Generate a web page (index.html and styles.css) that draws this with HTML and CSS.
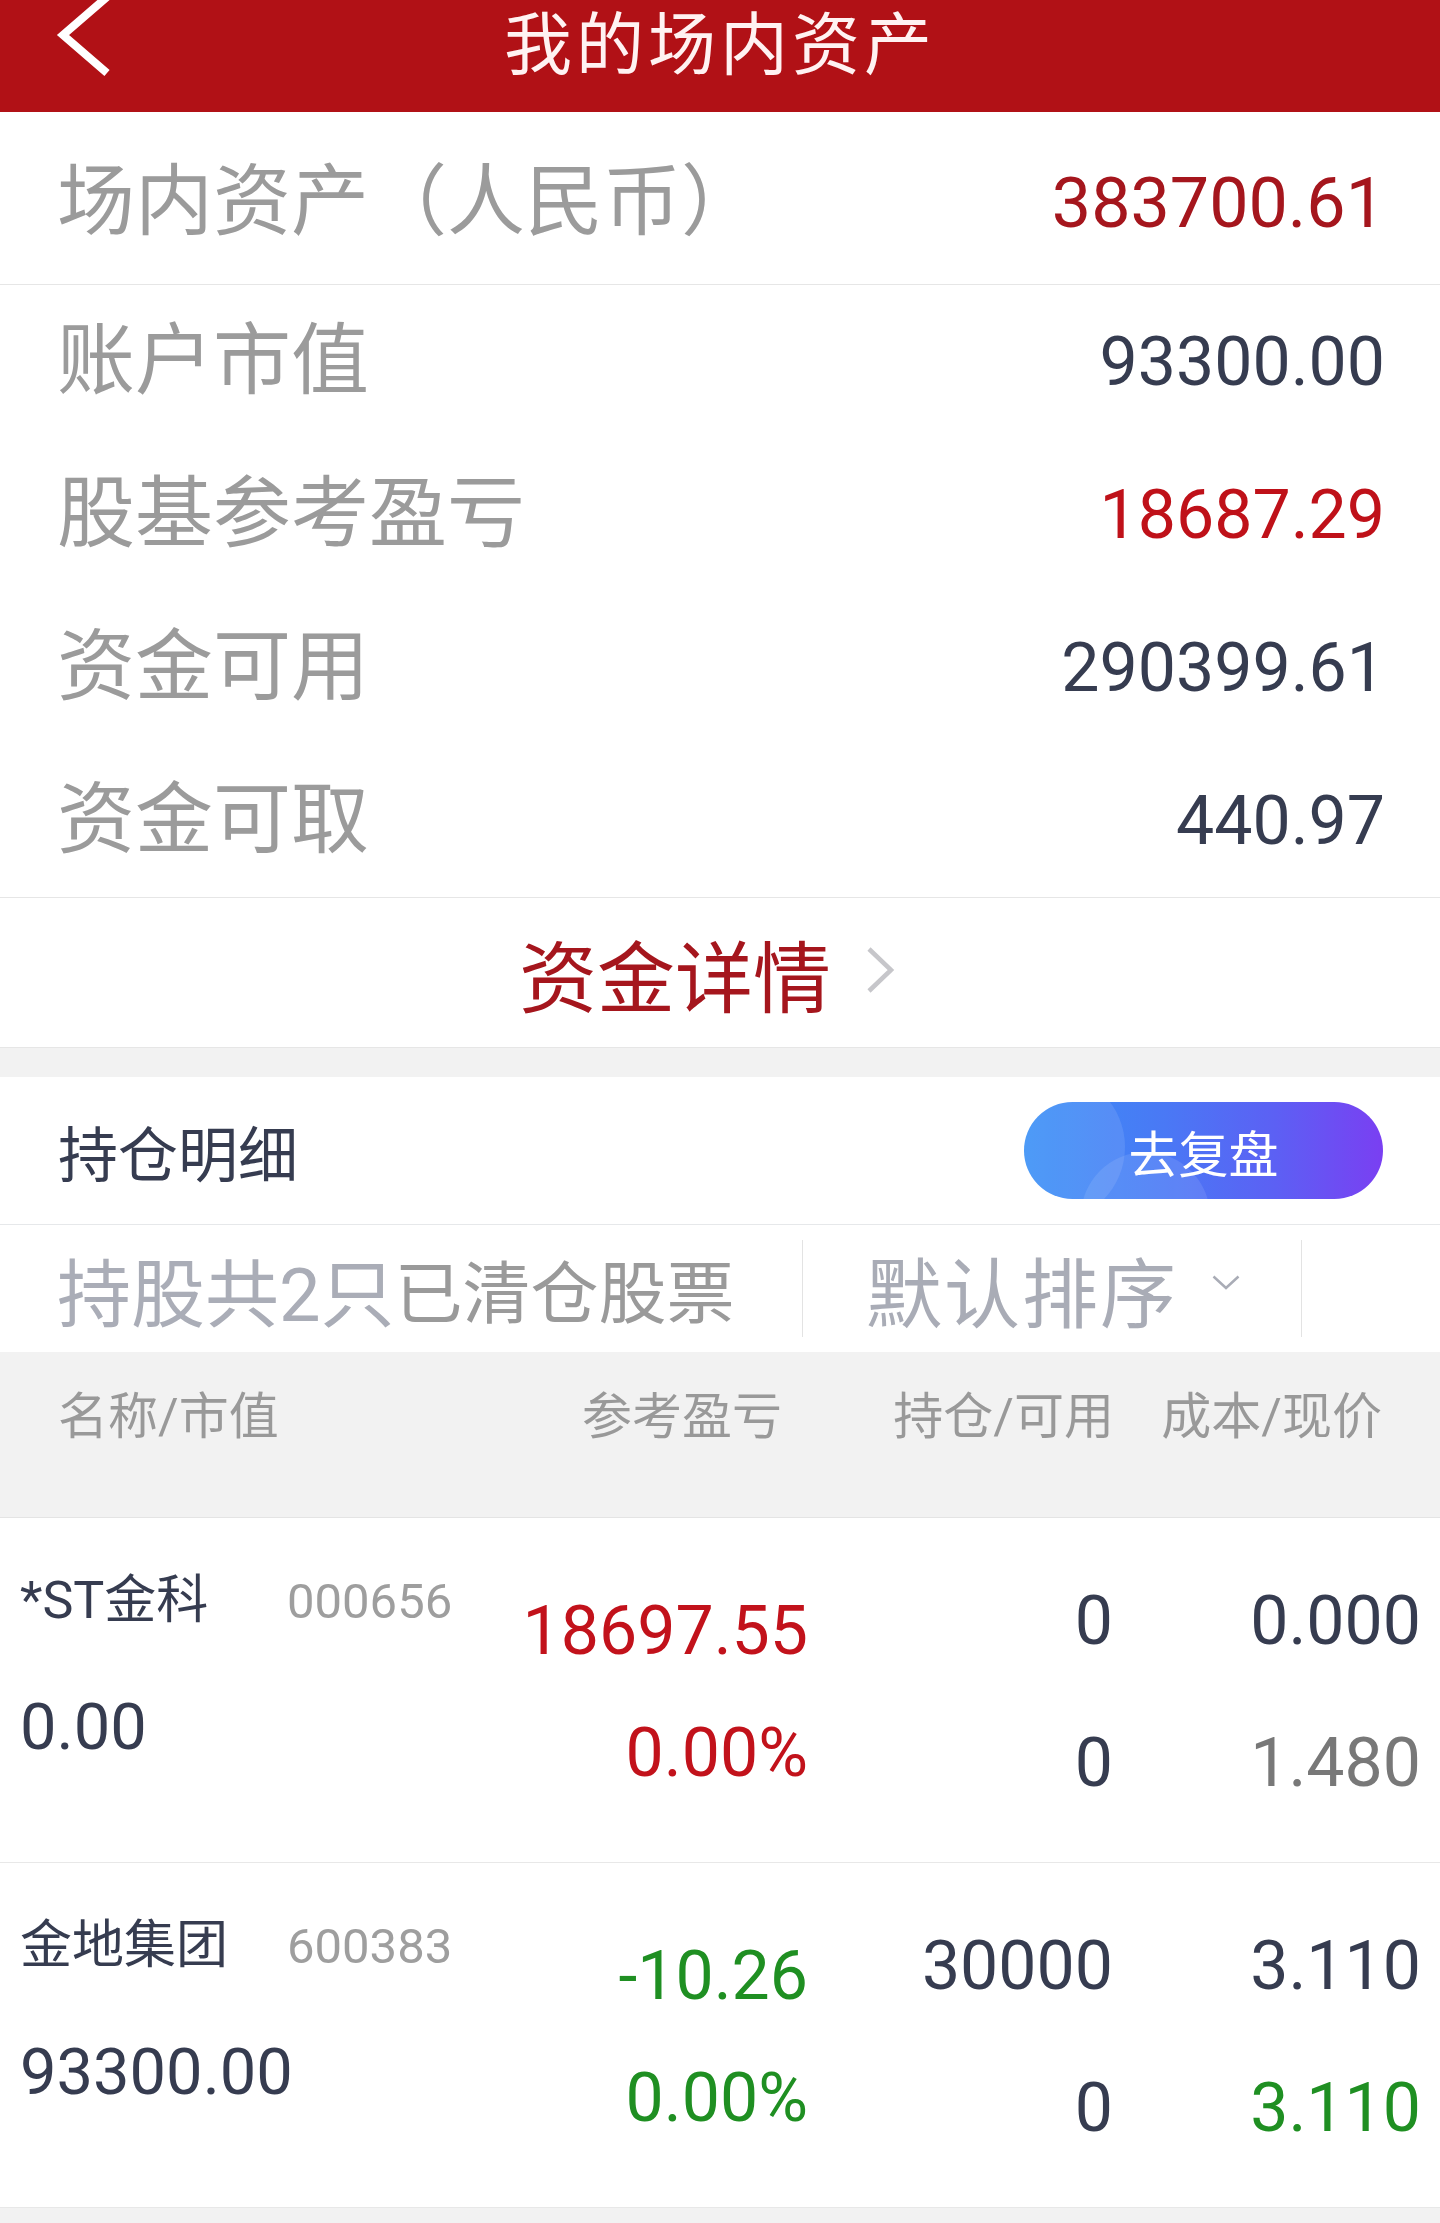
FILE: index.html
```html
<!DOCTYPE html>
<html lang="zh-CN">
<head>
  <meta charset="UTF-8">
  <title>我的场内资产</title>
  <link rel="stylesheet" href="styles.css">
</head>
<body>
  <header class="topbar">
    <svg class="back" viewBox="0 0 70 80"><path d="M57 -3 L13 35 L57 73" fill="none" stroke="#fff" stroke-width="8"/></svg>
    <h1>我的场内资产</h1>
    <div></div>
  </header>

  <section class="summary">
    <div class="total-row">
      <span class="label">场内资产（人民币）</span>
      <span class="total-value">383700.61</span>
    </div>
    <div class="asset-list">
      <div class="asset-row"><span class="label">账户市值</span><span class="value">93300.00</span></div>
      <div class="asset-row"><span class="label">股基参考盈亏</span><span class="value up">18687.29</span></div>
      <div class="asset-row"><span class="label">资金可用</span><span class="value">290399.61</span></div>
      <div class="asset-row"><span class="label">资金可取</span><span class="value">440.97</span></div>
    </div>
    <div class="detail-link">
      <span>资金详情</span>
      <svg class="arrow-right" viewBox="0 0 30 48"><path d="M4 3 L26 24 L4 45" fill="none" stroke="#c6c6ca" stroke-width="4.5"/></svg>
    </div>
  </section>

  <section class="holdings">
    <div class="holdings-head">
      <span class="holdings-title">持仓明细</span>
      <button class="replay"><span>去复盘</span></button>
    </div>

    <div class="filter-bar">
      <div class="filter-cell count"><span class="count-main">持股共2只</span><span class="count-cleared">已清仓股票</span></div>
      <div class="filter-cell sort">
        <span>默认排序</span>
        <svg class="arrow-down" viewBox="0 0 28 15"><path d="M1.5 1.5 L14 13 L26.5 1.5" fill="none" stroke="#a9acb6" stroke-width="2.5"/></svg>
      </div>
      <div class="filter-cell rest"></div>
    </div>

    <div class="table-head">
      <span class="th-name">名称/市值</span>
      <span>参考盈亏</span>
      <span>持仓/可用</span>
      <span>成本/现价</span>
    </div>

    <div class="stock-row">
      <div class="col col-name">
        <div class="name-line"><span class="stock-name">*ST金科</span><span class="stock-code">000656</span></div>
        <span class="market-value">0.00</span>
      </div>
      <div class="col col-pl up"><span>18697.55</span><span>0.00%</span></div>
      <div class="col col-qty"><span>0</span><span>0</span></div>
      <div class="col col-price"><span>0.000</span><span class="muted">1.480</span></div>
    </div>

    <div class="stock-row">
      <div class="col col-name">
        <div class="name-line"><span class="stock-name">金地集团</span><span class="stock-code">600383</span></div>
        <span class="market-value">93300.00</span>
      </div>
      <div class="col col-pl down"><span>-10.26</span><span>0.00%</span></div>
      <div class="col col-qty"><span>30000</span><span>0</span></div>
      <div class="col col-price"><span>3.110</span><span class="down">3.110</span></div>
    </div>
  </section>
</body>
</html>
```

FILE: styles.css
```css
* {
  box-sizing: border-box;
}

body {
  margin: 0;
  background: #f2f2f2;
  font-family: Roboto, "Noto Sans CJK SC", sans-serif;
  color: #363c50;
}

/* top bar */
.topbar {
  height: 112px;
  background: #b11116;
  display: grid;
  grid-template-columns: 1fr auto 1fr;
  align-items: start;
}

.back {
  display: block;
  width: 70px;
  height: 80px;
  margin-left: 50px;
}

.topbar h1 {
  margin: 0;
  font-size: 68px;
  font-weight: 400;
  line-height: 80px;
  letter-spacing: 4px;
  color: #fff2f2;
  font-family: "Noto Sans CJK SC", sans-serif;
}

/* summary */
.summary {
  background: #fff;
  margin-bottom: 29px;
}

.label {
  font-size: 78px;
  line-height: 90px;
  color: #9b9b9b;
}

.total-row {
  height: 173px;
  display: flex;
  justify-content: space-between;
  align-items: center;
  padding: 10px 55px 0 57px;
  border-bottom: 1px solid #e6e6e6;
}

.total-value {
  font-size: 70px;
  color: #a5161d;
}

.asset-list {
  border-bottom: 1px solid #e6e6e6;
}

.asset-row {
  height: 153px;
  display: flex;
  justify-content: space-between;
  align-items: center;
  padding: 0 55px 0 57px;
}

.value {
  font-size: 68px;
  color: #363c50;
}

.value.up {
  color: #bf1119;
}

.detail-link {
  height: 150px;
  display: flex;
  justify-content: center;
  align-items: center;
  gap: 34px;
  padding-right: 26px;
  border-bottom: 1px solid #e6e6e6;
  font-size: 78px;
  color: #a5161d;
}

.arrow-right {
  width: 30px;
  height: 48px;
  margin-top: -6px;
}

/* holdings */
.holdings {
  background: #fff;
}

.holdings-head {
  height: 148px;
  display: flex;
  justify-content: space-between;
  align-items: center;
  padding: 0 57px 0 58px;
  border-bottom: 1px solid #e6e8ea;
}

.holdings-title {
  font-size: 60px;
  color: #363c50;
}

.replay {
  position: relative;
  overflow: hidden;
  width: 359px;
  height: 97px;
  padding: 0;
  border: 0;
  border-radius: 49px;
  background: linear-gradient(90deg, #3990f6 0%, #4a78f5 40%, #5c60f4 70%, #7a3ff2 100%);
  color: #fff;
  font-family: "Noto Sans CJK SC", sans-serif;
  font-size: 50px;
}

.replay::before {
  content: "";
  position: absolute;
  left: -49px;
  top: -30px;
  width: 150px;
  height: 150px;
  border-radius: 50%;
  background: rgba(255, 255, 255, 0.1);
}

.replay::after {
  content: "";
  position: absolute;
  left: 57px;
  top: 50px;
  width: 129px;
  height: 129px;
  border-radius: 50%;
  background: rgba(255, 255, 255, 0.1);
}

.replay span {
  position: relative;
}

.filter-bar {
  height: 127px;
  display: flex;
  align-items: center;
}

.filter-cell {
  height: 97px;
  display: flex;
  align-items: center;
  border-right: 1px solid #e3e3e3;
}

.count {
  width: 803px;
  padding-left: 57px;
}

.count-main {
  font-size: 74px;
  color: #aaadb7;
}

.count-cleared {
  font-size: 68px;
  color: #9a9a9a;
}

.sort {
  width: 499px;
  padding-left: 63px;
  font-size: 76px;
  letter-spacing: 2px;
  color: #a9acb6;
}

.arrow-down {
  width: 28px;
  height: 15px;
  margin-left: 34px;
  margin-top: -12px;
}

.rest {
  flex: 1;
  border-right: 0;
}

.table-head {
  height: 166px;
  display: grid;
  grid-template-columns: 1fr 300px 332px 268px;
  align-items: start;
  padding: 40px 58px 0 58px;
  background: #f2f2f2;
  border-bottom: 1px solid #e4e4e4;
  font-size: 50px;
  line-height: 50px;
  color: #999;
  text-align: right;
}

.th-name {
  text-align: left;
}

.stock-row {
  height: 345px;
  display: grid;
  grid-template-columns: 460px 328px 305px 1fr;
  align-items: center;
  padding: 4px 19px 0 20px;
  border-bottom: 1px solid #e8e8e8;
}

.col {
  display: flex;
  flex-direction: column;
  align-items: flex-end;
  font-size: 68px;
  line-height: 68px;
}

.col-pl {
  gap: 54px;
}

.col-qty,
.col-price {
  gap: 74px;
}

.col-name {
  align-items: flex-start;
  gap: 65px;
  padding-bottom: 52px;
}

.name-line {
  display: flex;
  align-items: baseline;
  line-height: 56px;
}

.stock-name {
  width: 267px;
  font-size: 52px;
}

.stock-code {
  font-size: 49px;
  color: #9e9e9e;
}

.market-value {
  font-size: 65px;
  line-height: 64px;
}

.up {
  color: #c2121b;
}

.down {
  color: #1f8f22;
}

.muted {
  color: #787878;
}
```
